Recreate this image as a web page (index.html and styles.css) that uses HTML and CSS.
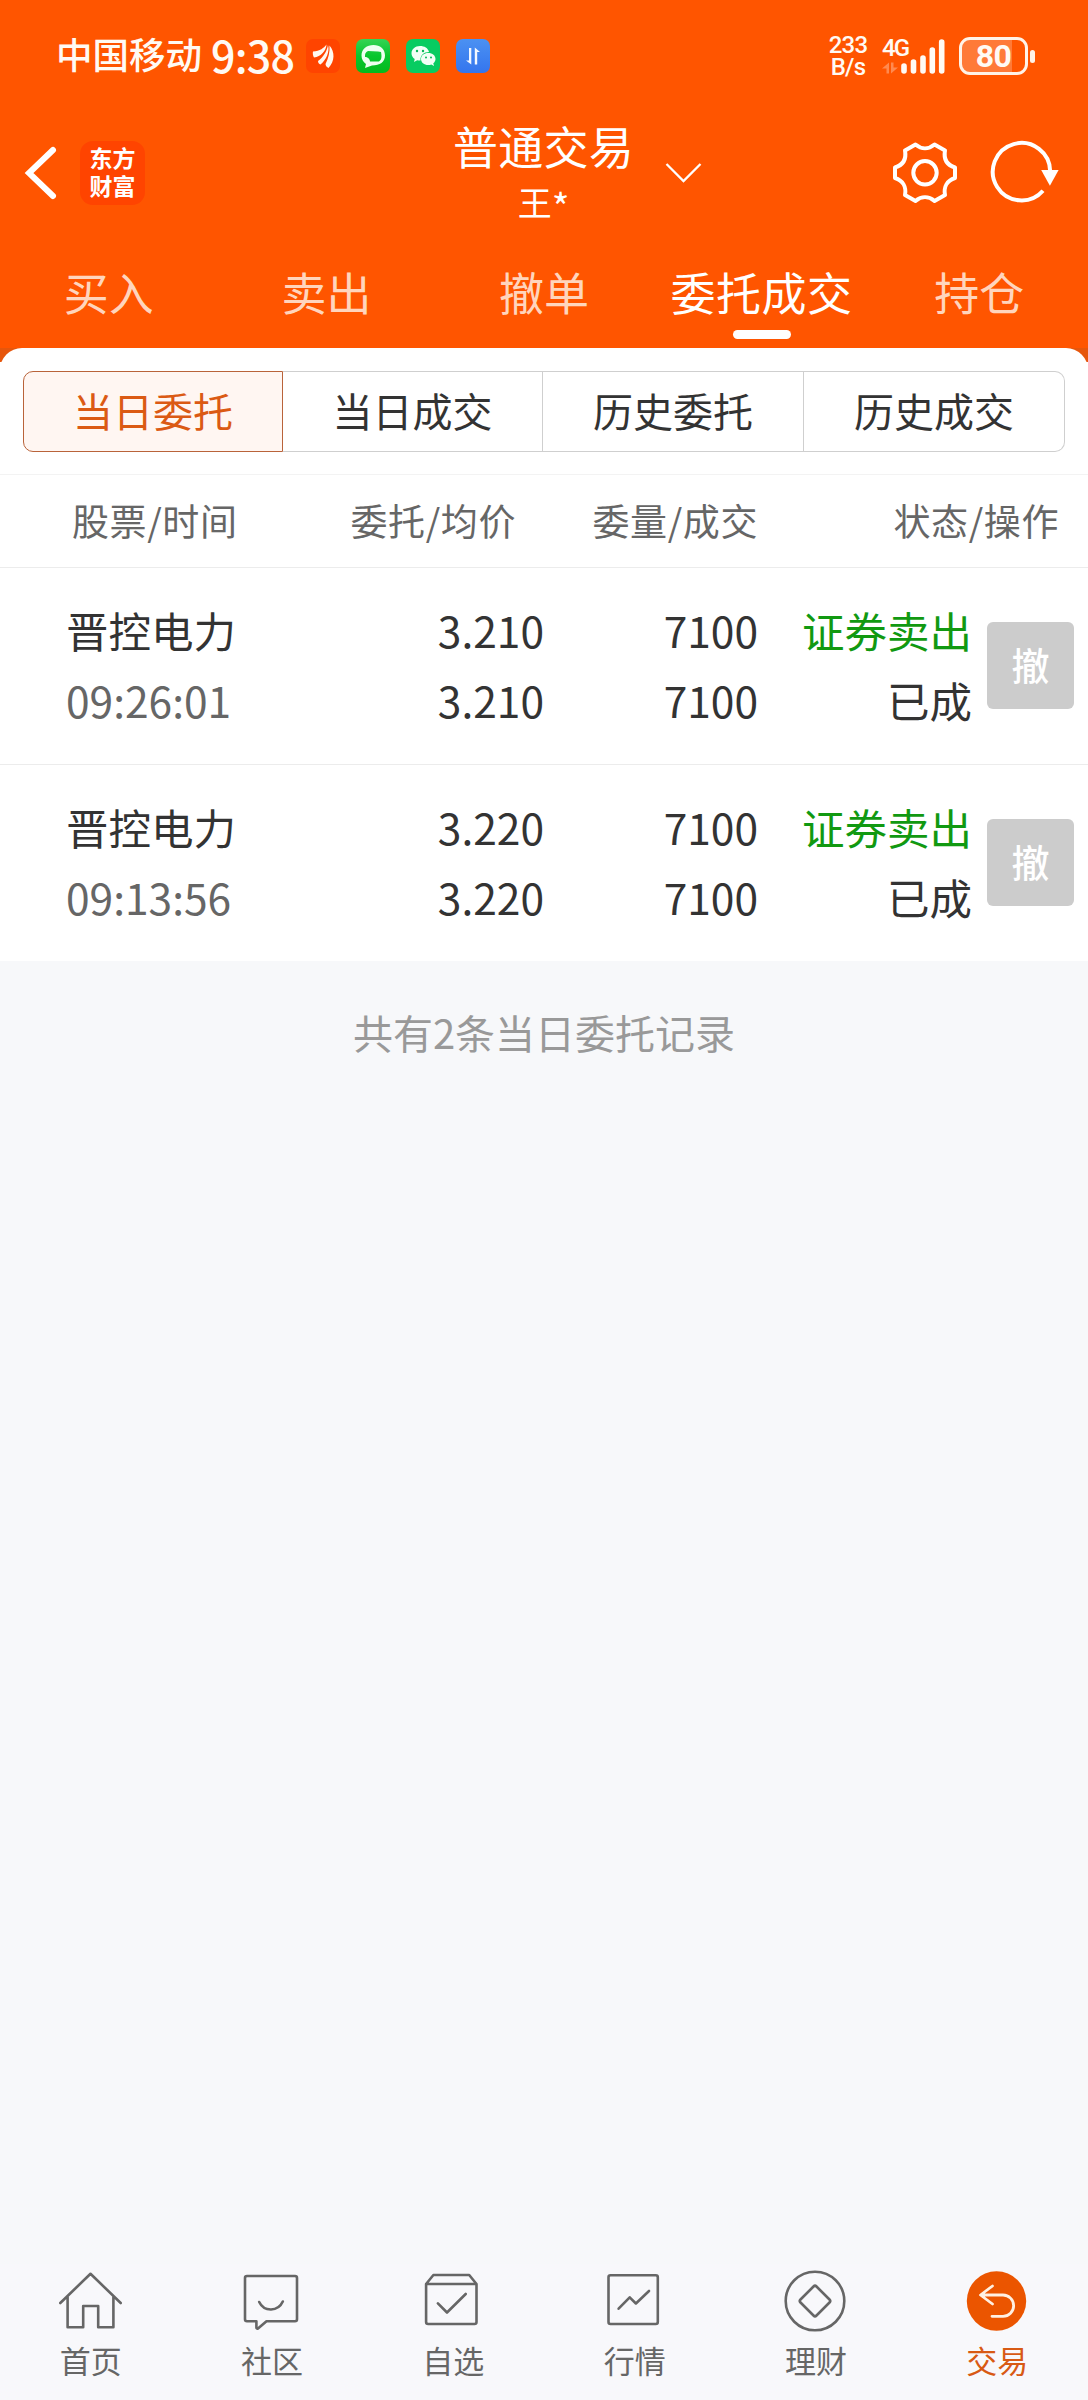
FILE: index.html
```html
<!DOCTYPE html>
<html lang="zh-CN">
<head>
<meta charset="utf-8">
<title>普通交易</title>
<link rel="stylesheet" href="styles.css">
</head>
<body>
<div class="app">
  <header class="top">
    <div class="status">
      <span class="carrier">中国移动</span>
      <span class="clock">9:38</span>
      <div class="notices">
        <svg width="34" height="34" viewBox="0 0 34 34"><rect width="34" height="34" rx="7" fill="#ff4400"/><g fill="#fff8f0"><path d="M7 12.500C14 12 18 9 20.500 5.500C20 12 15 17.500 8 18.500C7 17 6.500 14 7 12.500Z"/><path d="M12 22C17.500 18 21 12 22 6C24 13 20 21 14.500 25.500C13 25 12 24 12 22Z"/><path d="M19.500 25C22.500 19 24 13 23.500 6.500C29 13 29 22 22.500 29C21 28 19.500 27 19.500 25Z"/></g></svg>
        <svg width="34" height="34" viewBox="0 0 34 34"><defs><linearGradient id="sms" x2="0" y2="1"><stop stop-color="#35d455"/><stop offset=".5" stop-color="#08c62d"/><stop offset="1" stop-color="#04b91d"/></linearGradient></defs><rect width="34" height="34" rx="7" fill="url(#sms)"/><path fill="#eefff0" fill-rule="evenodd" d="M17.500 6C24 6 29 10 29 16.500S24 26.500 16 26.500L9 29L10 25C7 23 5.500 20 5.500 16.500C5.500 10 11 6 17.500 6ZM12 12C9.500 13 8.800 15 9 18C11.500 18 14 20 14 22.500H23C25.500 21 26 18 25 13L22 12.500Z"/><path d="M10 19.500Q12.500 20 12.500 23" fill="none" stroke="#eefff0" stroke-width="1"/></svg>
        <svg width="34" height="34" viewBox="0 0 34 34"><rect width="34" height="34" rx="7" fill="#08cc61"/><path fill="#f2fff6" d="M14 7C9 7 5.500 10.300 5.500 14.300C5.500 16.800 6.800 18.800 8.700 20L8 23L11.200 21.300Q12.700 21.700 14.500 21.600C14 16 18 13 23 13C22 9 18.500 7 14 7Z"/><path fill="#f2fff6" d="M22.300 14C18 14 15 16.600 15 20S18 26 22.300 26Q24 26 25.300 25.500L28 27L27.300 24.300C28.700 23.200 29.500 21.700 29.500 20C29.500 16.600 26.500 14 22.300 14Z"/><g fill="#08b858"><circle cx="11" cy="12" r="1.200"/><circle cx="17" cy="12" r="1.200"/><circle cx="20" cy="18.500" r="1"/><circle cx="25" cy="18.500" r="1"/></g></svg>
        <svg width="34" height="34" viewBox="0 0 34 34"><defs><linearGradient id="net" x2="0" y2="1"><stop stop-color="#4b91f2"/><stop offset="1" stop-color="#3475ee"/></linearGradient></defs><rect width="34" height="34" rx="7" fill="url(#net)"/><path fill="#f4f8ff" d="M13 9H15.300V25.500L10 21.500H13ZM18.800 8.500L24 13H21.200V25.500H18.800Z"/></svg>
      </div>
      <div class="speed"><span>233</span><span>B/s</span></div>
      <div class="signal">
        <span class="net">4G</span>
        <svg width="64" height="36" viewBox="0 0 64 36"><path d="M0 29.500L7 23.500V34.500H4.500V29.500ZM9 23.500H11.500V28.500H16L9 34.500Z" fill="#ff8a50"/><path d="M22 27V32M31.500 23V32M41 19V32M50.300 11V32M59.700 3V32" stroke="#fffaf4" stroke-width="5.600" stroke-linecap="round"/></svg>
      </div>
      <div class="battery"><span class="level">80</span></div>
      <i class="nub"></i>
    </div>

    <div class="bar">
      <div class="bar-left">
        <svg width="36" height="56" viewBox="0 0 36 56"><path d="M30 5L6 28L30 51" fill="none" stroke="#fff" stroke-width="6" stroke-linecap="round"/></svg>
        <div class="logo"><span>东方</span><span>财富</span></div>
      </div>
      <div class="title"><strong>普通交易</strong><span>王<i class="mask">*</i></span></div>
      <svg class="caret" width="38" height="22" viewBox="0 0 38 22"><path d="M1.500 2L18.500 19L35.500 2" fill="none" stroke="#fff" stroke-width="2.300"/></svg>
      <div class="actions">
        <svg width="64" height="64" viewBox="0 0 64 64" fill="none" stroke="#fff" stroke-width="4" stroke-linejoin="round"><path d="M22.500 3.500C28.500 8.500 35.500 8.500 41.500 3.500L52 9.500C50.500 18 54 24 62 26.500V37C54 39.500 50.500 46 52 54L41.500 60C35.500 55 28.500 55 22.500 60L12 54C13.500 46 10 39.500 2 37V26.500C10 24 13.500 18 12 9.500Z"/><circle cx="32" cy="31.800" r="11.700"/></svg>
        <svg width="76" height="76" viewBox="0 0 76 76"><path d="M57 55.700A28.700 28.700 0 1 1 64.200 37" fill="none" stroke="#fff" stroke-width="4"/><path d="M55.200 35H72.600L63.900 50.700Z" fill="#fff"/></svg>
      </div>
    </div>

    <nav class="tabs">
      <a>买入</a><a>卖出</a><a>撤单</a><a class="on">委托成交</a><a>持仓</a>
    </nav>
  </header>

  <div class="curve"></div>

  <section class="panel">
    <div class="segments">
      <span class="seg on">当日委托</span><span class="seg">当日成交</span><span class="seg">历史委托</span><span class="seg">历史成交</span>
    </div>
    <div class="cols head"><span>股票/时间</span><span>委托/均价</span><span>委量/成交</span><span class="wide">状态/操作</span></div>
    <div class="cols order">
      <div><b>晋控电力</b><b class="time">09:26:01</b></div>
      <div><b>3.210</b><b>3.210</b></div>
      <div><b>7100</b><b>7100</b></div>
      <div><b class="sell">证券卖出</b><b class="done">已成</b></div>
      <button class="cancel">撤</button>
    </div>
    <div class="cols order">
      <div><b>晋控电力</b><b class="time">09:13:56</b></div>
      <div><b>3.220</b><b>3.220</b></div>
      <div><b>7100</b><b>7100</b></div>
      <div><b class="sell">证券卖出</b><b class="done">已成</b></div>
      <button class="cancel">撤</button>
    </div>
  </section>

  <p class="summary">共有2条当日委托记录</p>

  <nav class="dock">
    <a><svg viewBox="0 0 72 72"><path d="M5.300 39L35.500 9.800L65.700 39M12.600 33V63.300H28.200V42H43.200V63.300H58.400V33"/></svg>首页</a>
    <a><svg viewBox="0 0 72 72"><path d="M11 12H59Q61 12 61 14V55.300Q61 57.300 59 57.300H30.500L22 64.500Q20.400 65 20.400 63.500V57.300H11Q9 57.300 9 55.300V14Q9 12 11 12ZM23.200 38C28 48 42 48 46.800 37.500"/></svg>社区</a>
    <a><svg viewBox="0 0 72 72"><path d="M9.100 20L16.400 11H52.200L59.500 20V58Q59.500 60 57.500 60H11.100Q9.100 60 9.100 58ZM9.100 20H59.500M20.900 39.300L30 48.500L48.700 30"/></svg>自选</a>
    <a><svg viewBox="0 0 72 72"><rect x="9.500" y="11.300" width="49.300" height="48.700" rx="2"/><path d="M19.600 44.700L30.700 33.300L36.900 39.500L50 27"/></svg>行情</a>
    <a><svg viewBox="0 0 72 72"><circle cx="35" cy="37" r="29.300"/><path d="M33.500 22.500Q35 21 36.500 22.500L49.500 35.500Q51 37 49.500 38.500L36.500 51.500Q35 53 33.500 51.500L20.500 38.500Q19 37 20.500 35.500Z"/></svg>理财</a>
    <a class="on"><svg viewBox="0 0 72 72"><circle class="disc" cx="35.500" cy="37" r="29.700"/><path d="M31.500 22L19.500 31L31.500 40M20 31H42A10.600 10.600 0 0 1 42 52.300H31"/></svg>交易</a>
  </nav>
</div>
</body>
</html>
```
FILE: styles.css
```css
* { box-sizing: border-box; }
body {
  margin: 0;
  font-family: "Noto Sans CJK SC", "Noto Sans", sans-serif;
  color: #333;
  background: #f7f8fa;
}
.app { width: 1088px; height: 2400px; display: flex; flex-direction: column; overflow: hidden; }
svg { display: block; flex: none; }

.top { height: 348px; background: #ff5500; color: #fff; }

/* Phone status line */
.status { height: 112px; padding-left: 56px; display: flex; align-items: center; color: #fffaf4; white-space: nowrap; }
.carrier { width: 155px; font-size: 36.500px; line-height: 50px; font-weight: 500; margin-top: -4px; }
.clock { width: 95px; font-size: 43px; line-height: 50px; font-weight: 500; letter-spacing: -0.800px; margin-top: -5px; }
.notices { display: flex; gap: 16px; width: 522px; }
.speed { width: 40px; display: flex; flex-direction: column; align-items: center; font: 500 24px/22px Roboto, sans-serif; letter-spacing: -0.800px; }
.signal { width: 70px; margin-left: 14px; display: grid; }
.signal > * { grid-area: 1 / 1; }
.signal svg { margin-top: 1px; }
.net { font: 500 24px/20px Roboto, sans-serif; letter-spacing: -2px; }
.battery { width: 69px; height: 38px; margin-left: 7px; border: 3px solid #fff3e8; border-radius: 11px; background: linear-gradient(90deg, #ff7a38 50px, transparent 50px); display: flex; align-items: center; justify-content: center; }
.level { font: 700 32px/32px Roboto, sans-serif; letter-spacing: -0.500px; }
.nub { width: 5px; height: 13px; margin-left: 2px; border-radius: 3px; background: #fff3e8; }

/* Title bar */
.bar { height: 122px; display: grid; grid-template-columns: 442px 203px 38px 1fr; align-items: center; }
.bar-left { display: flex; align-items: center; padding-left: 23px; gap: 21px; }
.logo { width: 65px; height: 64px; border-radius: 13px; background: #ff4400; display: flex; flex-direction: column; align-items: center; justify-content: center; font-size: 23px; line-height: 28px; font-weight: 700; padding-bottom: 4px; }
.title { display: flex; flex-direction: column; align-items: center; }
.title strong { font-size: 45px; line-height: 58px; font-weight: 400; letter-spacing: 0.300px; }
.title span { font-size: 34px; line-height: 54px; display: flex; }
.mask { font-style: normal; font-size: 38px; line-height: 54px; height: 54px; padding-top: 4px; }
.caret { margin-left: 20px; }
.actions { display: flex; align-items: center; gap: 29px; justify-content: flex-end; padding-right: 26px; }

.tabs { height: 114px; display: grid; grid-template-columns: repeat(5, 1fr); }
.tabs a { display: flex; flex-direction: column; align-items: center; font-size: 45px; line-height: 60px; padding-top: 28px; color: #ffd5bd; }
.tabs .on { color: #fff; letter-spacing: 0.500px; }
.tabs .on::after { content: ""; width: 58px; height: 9px; margin-top: 8px; border-radius: 5px; background: #fff; flex: none; }

.curve { height: 14px; flex: none; overflow: hidden; background: #e6560c; }
.curve::before { content: ""; display: block; height: 50px; border-radius: 22px; background: #fff; }

.panel { background: #fff; height: 599px; flex: none; }
.segments { display: grid; grid-template-columns: 260px 260px 261px 261px; margin: 0 23px; padding-top: 9px; height: 112px; }
.seg { height: 81px; border: 1px solid #cfcfcf; border-left: 0; font-size: 40px; line-height: 76px; text-align: center; }
.seg:last-child { border-radius: 0 10px 10px 0; }
.seg.on { border: 1px solid #b9633a; border-radius: 10px 0 0 10px; background: #fff6f2; color: #db5a14; }

/* Order list */
.cols { display: grid; grid-template-columns: 300px 244px 214px 214px 116px; }
.head { height: 94px; border-top: 1px solid #f3f3f3; border-bottom: 1px solid #ececec; font-size: 37px; line-height: 90px; letter-spacing: 0.600px; color: #666; }
.head span { text-align: right; margin-right: 28px; }
.head span:first-child { text-align: left; margin: 0 0 0 72px; }
.head span:nth-child(3) { margin-right: 0; }
.head .wide { grid-column: 4 / 6; margin-right: 29px; }
.order { height: 196px; padding-top: 27px; }
.order + .order { border-top: 1px solid #ececec; height: 197px; }
.order div { display: flex; flex-direction: column; text-align: right; }
.order div:first-child { text-align: left; padding-left: 66px; }
.order b { font-size: 42.500px; line-height: 70px; font-weight: 400; }
.order .time { color: #666; }
.order .sell { color: #119911; }
.cancel { width: 87px; height: 87px; margin: 27px 0 0 15px; padding: 0 0 3px; border: 0; border-radius: 6px; background: #ccc; color: #fff; font: 500 38px/50px "Noto Sans CJK SC", sans-serif; }

.summary { margin: 41px 0 0; text-align: center; font-size: 40px; line-height: 60px; color: #999; }

/* Bottom navigation */
.dock { margin-top: auto; height: 136px; flex: none; display: grid; grid-template-columns: repeat(6, 1fr); background: #f8f8fb; }
.dock a { display: flex; flex-direction: column; align-items: center; font-size: 31px; line-height: 44px; color: #666; }
.dock svg { width: 72px; height: 72px; margin-bottom: 2px; fill: none; stroke: #666; stroke-width: 2.600; stroke-linecap: round; stroke-linejoin: round; }
.dock .on { color: #d85a14; }
.dock .on svg { stroke: #fff0e2; stroke-width: 2.800; }
.dock .disc { fill: #eb5500; stroke: none; }
```
